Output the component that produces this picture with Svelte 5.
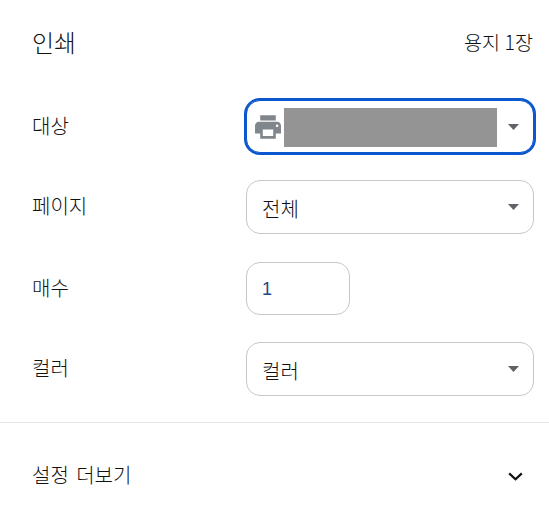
<script>
  const arrow = 'M0 0h11L5.5 6z';
</script>

<div class="panel">
  <header class="head">
    <h1>인쇄</h1>
    <span class="count">용지 1장</span>
  </header>

  <div class="rows">
    <div class="row short">
      <span class="label">대상</span>
      <div class="box select focused">
        <svg class="printer" viewBox="2 3 20 18" aria-hidden="true">
          <path d="M19 8H5c-1.66 0-3 1.34-3 3v6h4v4h12v-4h4v-6c0-1.66-1.34-3-3-3zm-3 11H8v-5h8v5zm3-7c-.55 0-1-.45-1-1s.45-1 1-1 1 .45 1 1-.45 1-1 1zm-1-9H6v4h12V3z" />
        </svg>
        <div class="redacted"></div>
        <svg class="arrow" viewBox="0 0 11 6" aria-hidden="true"><path d={arrow} /></svg>
      </div>
    </div>

    <div class="row spaced">
      <span class="label">페이지</span>
      <div class="box select">
        <span class="value">전체</span>
        <svg class="arrow" viewBox="0 0 11 6" aria-hidden="true"><path d={arrow} /></svg>
      </div>
    </div>

    <div class="row short">
      <span class="label">매수</span>
      <div class="box number"><span class="num">1</span></div>
    </div>

    <div class="row">
      <span class="label">컬러</span>
      <div class="box select">
        <span class="value">컬러</span>
        <svg class="arrow" viewBox="0 0 11 6" aria-hidden="true"><path d={arrow} /></svg>
      </div>
    </div>
  </div>

  <div class="more">
    <span class="label">설정 더보기</span>
    <svg class="chevron" viewBox="0 0 15 9" aria-hidden="true">
      <path d="M1.2 1.4 7.5 7.2l6.3-5.8" />
    </svg>
  </div>
</div>

<style>
  :global(body) {
    margin: 0;
    background: #fff;
  }
  .panel {
    width: 549px;
    height: 529px;
    box-sizing: border-box;
    overflow: hidden;
    font-family: "Noto Sans CJK KR", "Liberation Sans", sans-serif;
    font-weight: 300;
    color: #111;
  }
  .head {
    display: flex;
    justify-content: space-between;
    align-items: center;
    box-sizing: border-box;
    height: 86px;
    padding: 0 16px 3px 32px;
  }
  h1 {
    margin: 0;
    font-size: 24px;
    font-weight: 300;
    line-height: 32px;
  }
  .count {
    font-size: 19.6px;
    line-height: 26px;
  }
  .rows {
    display: flex;
    flex-direction: column;
    gap: 27px;
    padding: 14px 15px 0 32px;
  }
  .row {
    display: grid;
    grid-template-columns: 214px 288px;
    align-items: center;
    height: 54px;
  }
  .row.short {
    height: 53px;
  }
  .row.spaced {
    margin-bottom: 1px;
  }
  .label {
    font-size: 20px;
    line-height: 26px;
    margin-top: -2px;
  }
  .box {
    box-sizing: border-box;
    height: 100%;
    border: 1px solid #c7c7c7;
    border-radius: 14px;
    display: flex;
    align-items: center;
    background: #fff;
  }
  .select {
    padding: 0 14px 0 15px;
  }
  .focused {
    border-color: #0b57d0;
    box-shadow: 0 0 0 2px #0b57d0;
    padding-left: 8px;
  }
  .printer {
    width: 26px;
    height: 24px;
    fill: #80868b;
    flex: none;
  }
  .redacted {
    width: 213px;
    height: 39px;
    margin: 2px 0 0 3px;
    background: #949494;
    flex: none;
  }
  .value {
    font-size: 20px;
    line-height: 26px;
    margin-top: 3px;
  }
  .arrow {
    width: 11px;
    height: 6px;
    margin-left: auto;
    fill: #5f6368;
    flex: none;
  }
  .number {
    width: 104px;
    padding-left: 15px;
  }
  .num {
    font-family: "Liberation Sans", sans-serif;
    font-size: 18px;
    color: #1a4a80;
    margin-top: 1px;
  }
  .more {
    display: flex;
    justify-content: space-between;
    align-items: center;
    margin-top: 26px;
    height: 107px;
    border-top: 1px solid #e8e8e8;
    padding: 0 26px 0 32px;
    box-sizing: border-box;
  }
  .more .label {
    margin-top: -2px;
    word-spacing: 3px;
  }
  .chevron {
    width: 15px;
    height: 9px;
    fill: none;
    stroke: #111;
    stroke-width: 2.2;
  }
</style>
